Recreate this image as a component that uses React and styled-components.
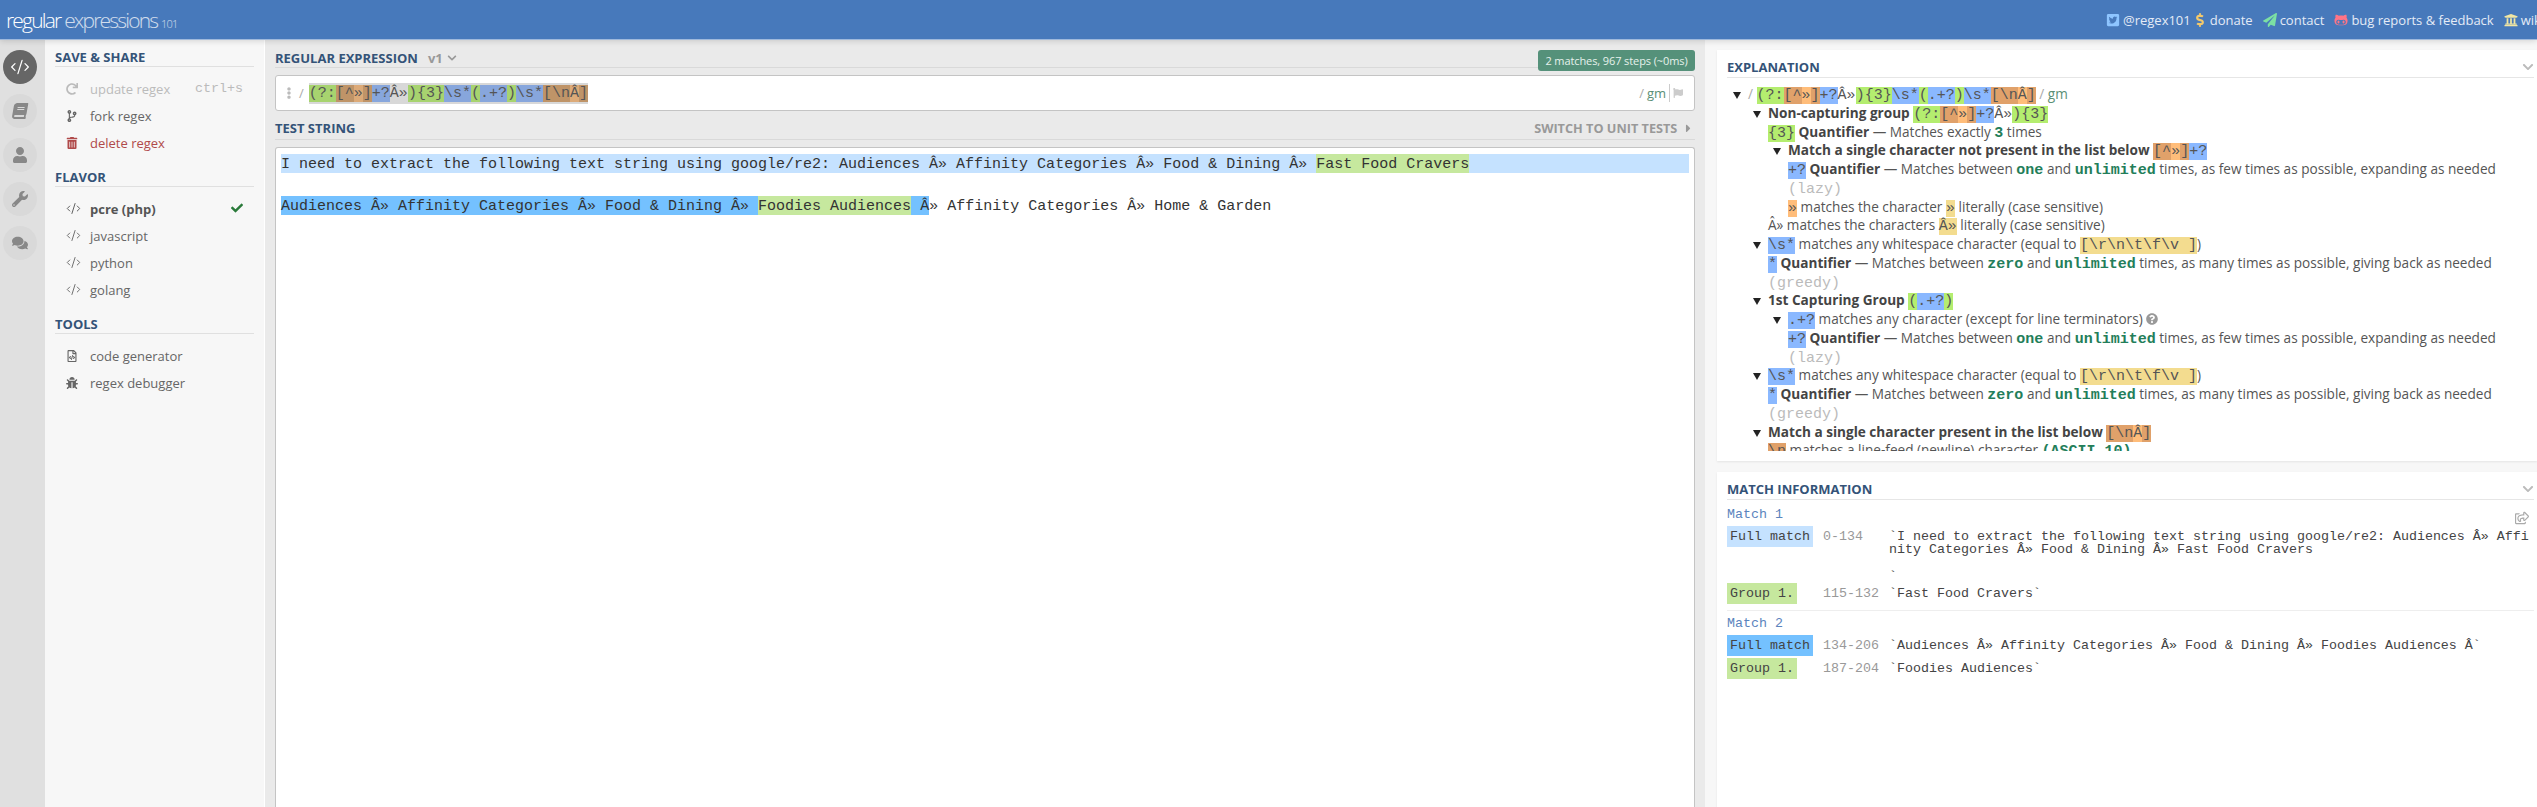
import React from "react";
import styled, { createGlobalStyle } from "styled-components";
import { CodeXml } from "lucide-react";
import {
    FaBook,
    FaUser,
    FaWrench,
    FaComments,
    FaRedo,
    FaCodeBranch,
    FaTrashAlt,
    FaCheck,
    FaRegFileCode,
    FaBug,
    FaTwitterSquare,
    FaDollarSign,
    FaPaperPlane,
    FaGithubAlt,
    FaUniversity,
    FaFlag,
    FaChevronDown,
    FaCaretRight,
    FaQuestionCircle,
    FaRegShareSquare,
    FaEllipsisV,
} from "react-icons/fa";

const SANS = `"Open Sans", "Noto Sans", sans-serif`;
const MONO = `"Liberation Mono", monospace`;

const REGEX_TOKENS = [
    ["group", "(?:"],
    ["set", "[^"],
    ["char", "»"],
    ["set", "]"],
    ["quant", "+?"],
    ["plain", "Â»"],
    ["group", "){3}"],
    ["quant", "\\s*"],
    ["group", "("],
    ["quant", ".+?"],
    ["group", ")"],
    ["quant", "\\s*"],
    ["set", "[\\n"],
    ["char", "Â"],
    ["set", "]"],
];

const NON_CAPTURING = REGEX_TOKENS.slice(0, 7);
const CHAR_SET = REGEX_TOKENS.slice(1, 5);
const CAPTURE = REGEX_TOKENS.slice(8, 11);
const LAST_SET = REGEX_TOKENS.slice(12);

const Tokens = ({ list, $muted }) =>
    list.map(([kind, text], i) => (
        <Tok key={i} $kind={kind} $muted={$muted}>
            {text}
        </Tok>
    ));

const Quantifier = ({ level, token, from, how, mode }) => (
    <Row $level={level}>
        <Tok $kind="quant">{token}</Tok> <b>Quantifier</b> — Matches between <Em>{from}</Em> and{" "}
        <Em>unlimited</Em> times, {how} <Dim>({mode})</Dim>
    </Row>
);

const Whitespace = () => (
    <>
        <Row $level={1} $open>
            <Tok $kind="quant">\s*</Tok> matches any whitespace character (equal to{" "}
            <Tok $kind="literal">[\r\n\t\f\v ]</Tok>)
        </Row>
        <Quantifier
            level={1}
            token="*"
            from="zero"
            how="as many times as possible, giving back as needed"
            mode="greedy"
        />
    </>
);

const App = () => {
    return (
        <>
            <Global />
            <Page>
                <Header>
                    <Logo>
                        regular <span>expressions</span> <small>101</small>
                    </Logo>
                    <Nav>
                        <NavLink $color="#8ec5ff">
                            <FaTwitterSquare /> @regex101
                        </NavLink>
                        <NavLink $color="#f3c96c">
                            <FaDollarSign /> donate
                        </NavLink>
                        <NavLink $color="#7ce0a3">
                            <FaPaperPlane /> contact
                        </NavLink>
                        <NavLink $color="#ff7486">
                            <FaGithubAlt /> bug reports &amp; feedback
                        </NavLink>
                        <NavLink $color="#f1e6a3">
                            <FaUniversity /> wiki
                        </NavLink>
                    </Nav>
                </Header>
                <Main>
                    <Rail>
                        <RailButton $active>
                            <CodeXml size={20} strokeWidth={1.5} />
                        </RailButton>
                        <RailButton>
                            <TiltedBook />
                        </RailButton>
                        <RailButton>
                            <FaUser />
                        </RailButton>
                        <RailButton>
                            <FaWrench />
                        </RailButton>
                        <RailButton>
                            <FaComments />
                        </RailButton>
                    </Rail>
                    <Sidebar>
                        <SideTitle>Save &amp; Share</SideTitle>
                        <SideList>
                            <SideItem $tone="disabled">
                                <FaRedo />
                                update regex
                                <Shortcut>ctrl+s</Shortcut>
                            </SideItem>
                            <SideItem>
                                <FaCodeBranch />
                                fork regex
                            </SideItem>
                            <SideItem $tone="danger">
                                <FaTrashAlt />
                                delete regex
                            </SideItem>
                        </SideList>
                        <SideTitle>Flavor</SideTitle>
                        <SideList>
                            <SideItem $tone="active">
                                <CodeXml size={15} strokeWidth={1.5} />
                                pcre (php)
                                <Check>
                                    <FaCheck />
                                </Check>
                            </SideItem>
                            <SideItem>
                                <CodeXml size={15} strokeWidth={1.5} />
                                javascript
                            </SideItem>
                            <SideItem>
                                <CodeXml size={15} strokeWidth={1.5} />
                                python
                            </SideItem>
                            <SideItem>
                                <CodeXml size={15} strokeWidth={1.5} />
                                golang
                            </SideItem>
                        </SideList>
                        <SideTitle>Tools</SideTitle>
                        <SideList>
                            <SideItem>
                                <FaRegFileCode />
                                code generator
                            </SideItem>
                            <SideItem>
                                <FaBug />
                                regex debugger
                            </SideItem>
                        </SideList>
                    </Sidebar>
                    <Center>
                        <CenterHead>
                            <Title>Regular Expression</Title>
                            <Version>
                                v1 <FaChevronDown />
                            </Version>
                            <Badge>2 matches, 967 steps (~0ms)</Badge>
                        </CenterHead>
                        <RegexBox>
                            <Grip>
                                <FaEllipsisV />
                            </Grip>
                            <Slash>/</Slash>
                            <RegexText>
                                <Tokens list={REGEX_TOKENS} $muted />
                            </RegexText>
                            <Flags>
                                <Slash>/</Slash>
                                <FlagText $divided>gm</FlagText>
                                <FaFlag />
                            </Flags>
                        </RegexBox>
                        <TestHead>
                            <Title>Test String</Title>
                            <SwitchLink>
                                Switch to unit tests <FaCaretRight />
                            </SwitchLink>
                        </TestHead>
                        <Editor>
                            <TestLine $fill="#c5e2ff">
                                I need to extract the following text string using google/re2:
                                Audiences Â» Affinity Categories Â» Food &amp; Dining Â»{" "}
                                <Mark $fill="#c6e89e">Fast Food Cravers</Mark>
                            </TestLine>
                            <TestLine>
                                <Mark $fill="#74c1ff">
                                    Audiences Â» Affinity Categories Â» Food &amp; Dining Â»{" "}
                                </Mark>
                                <Mark $fill="#c6e89e">Foodies Audiences</Mark>
                                <Mark $fill="#74c1ff"> Â</Mark>» Affinity Categories Â» Home &amp;
                                Garden
                            </TestLine>
                        </Editor>
                    </Center>
                    <Side>
                        <Panel $height="411px">
                            <PanelHead>
                                <Title>Explanation</Title>
                                <FaChevronDown />
                            </PanelHead>
                            <Tree>
                                <Row $level={0} $open>
                                    <Slash>/</Slash> <Tokens list={REGEX_TOKENS} />{" "}
                                    <Slash>/</Slash> <FlagText>gm</FlagText>
                                </Row>
                                <Row $level={1} $open>
                                    <b>Non-capturing group</b> <Tokens list={NON_CAPTURING} />
                                </Row>
                                <Row $level={1}>
                                    <Tok $kind="group">{"{3}"}</Tok> <b>Quantifier</b> — Matches
                                    exactly <Em>3</Em> times
                                </Row>
                                <Row $level={2} $open>
                                    <b>Match a single character not present in the list below</b>{" "}
                                    <Tokens list={CHAR_SET} />
                                </Row>
                                <Quantifier
                                    level={2}
                                    token="+?"
                                    from="one"
                                    how="as few times as possible, expanding as needed"
                                    mode="lazy"
                                />
                                <Row $level={2}>
                                    <Tok $kind="char">»</Tok> matches the character{" "}
                                    <Tok $kind="literal">»</Tok> literally (case sensitive)
                                </Row>
                                <Row $level={1}>
                                    Â» matches the characters <Tok $kind="literal">Â»</Tok> literally
                                    (case sensitive)
                                </Row>
                                <Whitespace />
                                <Row $level={1} $open>
                                    <b>1st Capturing Group</b> <Tokens list={CAPTURE} />
                                </Row>
                                <Row $level={2} $open>
                                    <Tok $kind="quant">.+?</Tok> matches any character (except for
                                    line terminators){" "}
                                    <Hint>
                                        <FaQuestionCircle />
                                    </Hint>
                                </Row>
                                <Quantifier
                                    level={2}
                                    token="+?"
                                    from="one"
                                    how="as few times as possible, expanding as needed"
                                    mode="lazy"
                                />
                                <Whitespace />
                                <Row $level={1} $open>
                                    <b>Match a single character present in the list below</b>{" "}
                                    <Tokens list={LAST_SET} />
                                </Row>
                                <Row $level={1}>
                                    <Tok $kind="set">\n</Tok> matches a line-feed (newline) character{" "}
                                    <Em>(ASCII 10)</Em>
                                </Row>
                            </Tree>
                        </Panel>
                        <Panel>
                            <PanelHead>
                                <Title>Match Information</Title>
                                <FaChevronDown />
                            </PanelHead>
                            <MatchBlock>
                                <MatchTitle>
                                    Match 1
                                    <Share>
                                        <FaRegShareSquare />
                                    </Share>
                                </MatchTitle>
                                <MatchRow>
                                    <MatchLabel $fill="#c5e2ff">Full match</MatchLabel>
                                    <MatchRange>0-134</MatchRange>
                                    <MatchValue>{`\`I need to extract the following text string using google/re2: Audiences Â» Affinity Categories Â» Food & Dining Â» Fast Food Cravers\n\n\``}</MatchValue>
                                </MatchRow>
                                <MatchRow>
                                    <MatchLabel $fill="#c6e89e">Group 1.</MatchLabel>
                                    <MatchRange>115-132</MatchRange>
                                    <MatchValue>`Fast Food Cravers`</MatchValue>
                                </MatchRow>
                            </MatchBlock>
                            <MatchBlock>
                                <MatchTitle>Match 2</MatchTitle>
                                <MatchRow>
                                    <MatchLabel $fill="#74c1ff">Full match</MatchLabel>
                                    <MatchRange>134-206</MatchRange>
                                    <MatchValue>
                                        `Audiences Â» Affinity Categories Â» Food &amp; Dining Â» Foodies
                                        Audiences Â`
                                    </MatchValue>
                                </MatchRow>
                                <MatchRow>
                                    <MatchLabel $fill="#c6e89e">Group 1.</MatchLabel>
                                    <MatchRange>187-204</MatchRange>
                                    <MatchValue>`Foodies Audiences`</MatchValue>
                                </MatchRow>
                            </MatchBlock>
                        </Panel>
                    </Side>
                </Main>
            </Page>
        </>
    );
};

export default App;

const Global = createGlobalStyle`
    html, body {
        margin: 0;
        height: 100%;
        overflow: hidden;
    }
    body {
        font-family: ${SANS};
        font-size: 13px;
        color: #555;
    }
`;

const Page = styled.div`
    height: 100vh;
    display: flex;
    flex-direction: column;
    overflow: hidden;
`;

const Header = styled.header`
    flex: 0 0 40px;
    box-sizing: border-box;
    display: flex;
    align-items: center;
    background: #4779bb;
    border-bottom: 1px solid #9fb9dc;
    box-shadow: 0 1px 6px rgba(0, 0, 0, 0.15);
    position: relative;
    z-index: 1;
    overflow: hidden;
`;

const Logo = styled.div`
    padding-left: 6px;
    color: #fff;
    font-size: 21px;
    font-weight: 300;
    letter-spacing: -1.8px;
    white-space: nowrap;
    span {
        opacity: 0.75;
    }
    small {
        font-size: 11px;
        letter-spacing: -0.8px;
        opacity: 0.75;
    }
`;

const Nav = styled.nav`
    flex: 0 0 431px;
    min-width: 0;
    margin-left: auto;
    display: flex;
    gap: 10px;
    white-space: nowrap;
`;

const NavLink = styled.a`
    flex: none;
    display: flex;
    align-items: center;
    gap: 3px;
    color: #e4ebf6;
    font-size: 13px;
    &:first-child {
        margin-right: -8px;
    }
    svg {
        color: ${(p) => p.$color};
        font-size: 14px;
    }
`;

const Main = styled.div`
    flex: 1;
    min-height: 0;
    display: grid;
    grid-template-columns: 45px 220px 1440px 1fr;
`;

const Rail = styled.div`
    background: #e0e0e0;
    padding: 10px 3px 0;
    display: flex;
    flex-direction: column;
    gap: 10px;
`;

const RailButton = styled.div`
    width: 34px;
    height: 34px;
    border-radius: 50%;
    background: ${(p) => (p.$active ? "#666" : "#d9d9d9")};
    color: ${(p) => (p.$active ? "#fff" : "#888")};
    display: flex;
    align-items: center;
    justify-content: center;
    font-size: 16px;
`;

const TiltedBook = styled(FaBook)`
    transform: skewX(-10deg);
`;

const Sidebar = styled.aside`
    background: #f7f7f7;
    border-right: 1px solid #fff;
    padding: 8px 10px 0 10px;
`;

const SideTitle = styled.h3`
    margin: 0;
    height: 18px;
    line-height: 18px;
    font-size: 13px;
    font-weight: 700;
    text-transform: uppercase;
    color: #345378;
    border-bottom: 1px solid #e0e0e0;
`;

const SideList = styled.div`
    padding: 8px 0 12px;
`;

const toneColor = {
    disabled: "#bbb",
    danger: "#b04a4a",
    active: "#555",
};

const SideItem = styled.div`
    height: 27px;
    display: flex;
    align-items: center;
    padding-left: 35px;
    position: relative;
    font-size: 13px;
    font-weight: ${(p) => (p.$tone === "active" ? 700 : 400)};
    color: ${(p) => toneColor[p.$tone] || "#666"};
    > svg {
        position: absolute;
        left: 11px;
        font-size: 12px;
    }
`;

const Shortcut = styled.span`
    margin-left: auto;
    margin-right: 11px;
    font-family: ${MONO};
    font-size: 13.33px;
    font-weight: 400;
    color: #bbb;
`;

const Check = styled.span`
    position: absolute;
    right: 11px;
    top: 7px;
    color: #2a7a3a;
    font-size: 12px;
    svg {
        display: block;
    }
`;

const Center = styled.section`
    background: #eaeaea;
    padding: 8px 10px 0;
    display: flex;
    flex-direction: column;
    min-height: 0;
`;

const Title = styled.h3`
    margin: 0;
    font-size: 13px;
    font-weight: 700;
    line-height: 18px;
    text-transform: uppercase;
    color: #345378;
`;

const CenterHead = styled.div`
    display: flex;
    align-items: center;
    gap: 10px;
    height: 19px;
    border-bottom: 1px solid #d9d9d9;
    position: relative;
`;

const Version = styled.span`
    display: flex;
    align-items: center;
    gap: 4px;
    font-weight: 700;
    color: #999;
    svg {
        font-size: 10px;
    }
`;

const Badge = styled.span`
    position: absolute;
    right: 0;
    top: 2px;
    width: 157px;
    height: 21px;
    box-sizing: border-box;
    border-radius: 3px;
    background: #55917a;
    color: #e6f2ec;
    font-size: 11px;
    letter-spacing: -0.1px;
    line-height: 21px;
    text-align: center;
    white-space: nowrap;
`;

const RegexBox = styled.div`
    margin-top: 7px;
    height: 36px;
    box-sizing: border-box;
    display: flex;
    align-items: center;
    background: #fff;
    border: 1px solid #c4c4c4;
    border-radius: 3px;
    padding: 0 11px 0 7px;
`;

const Grip = styled.span`
    color: #bbb;
    font-size: 12px;
    display: flex;
    margin-right: 4px;
`;

const Slash = styled.span`
    color: #aaa;
`;

const RegexText = styled.code`
    margin-left: 5px;
    font-family: ${MONO};
    font-size: 15px;
    line-height: 21px;
    background: #d8d8d8;
    color: #555;
    white-space: pre;
`;

const Flags = styled.div`
    margin-left: auto;
    display: flex;
    align-items: center;
    gap: 3px;
    svg {
        color: #ccc;
        font-size: 10px;
    }
`;

const FlagText = styled.span`
    color: #5a8f76;
    font-family: ${SANS};
    padding-right: ${(p) => (p.$divided ? "3px" : 0)};
    border-right: ${(p) => (p.$divided ? "1px solid #ccc" : "0")};
`;

const TestHead = styled.div`
    margin-top: 6px;
    height: 22px;
    display: flex;
    align-items: center;
    justify-content: space-between;
    border-bottom: 1px solid #d9d9d9;
`;

const SwitchLink = styled.span`
    display: flex;
    align-items: center;
    gap: 5px;
    font-size: 12.7px;
    font-weight: 700;
    text-transform: uppercase;
    color: #999;
`;

const Editor = styled.div`
    margin-top: 7px;
    flex: 1;
    background: #fff;
    border: 1px solid #c4c4c4;
    border-bottom: 0;
    border-radius: 3px 3px 0 0;
    padding: 6px 5px 0;
    font-family: ${MONO};
    font-size: 15px;
    color: #333;
`;

const TestLine = styled.div`
    height: 19px;
    line-height: 21px;
    margin-bottom: 23px;
    white-space: pre-wrap;
    background: ${(p) => p.$fill || "transparent"};
`;

const Mark = styled.span`
    display: inline-block;
    height: 19px;
    white-space: pre;
    background: ${(p) => p.$fill};
`;

const strongTok = {
    group: "#b4ed6f",
    set: "#e0a16a",
    char: "#ffbd7a",
    quant: "#8ab8ff",
    literal: "#f3dc8f",
    plain: "transparent",
};

const mutedTok = {
    group: "#a7d36f",
    set: "#bf9468",
    char: "#dcaa78",
    quant: "#87a6dc",
    plain: "transparent",
};

const Tok = styled.span`
    font-family: ${MONO};
    font-size: 15px;
    line-height: 1;
    color: #555;
    background: ${(p) => (p.$muted ? mutedTok : strongTok)[p.$kind]};
`;

const Side = styled.aside`
    background: #f7f7f7;
    padding: 10px 0 0 12px;
    display: flex;
    flex-direction: column;
    gap: 11px;
    min-width: 0;
    min-height: 0;
`;

const Panel = styled.div`
    background: #fff;
    box-shadow: 0 1px 2px rgba(0, 0, 0, 0.08);
    padding: 7px 3px 0 10px;
    box-sizing: border-box;
    flex: ${(p) => (p.$height ? `0 0 ${p.$height}` : "1")};
    display: flex;
    flex-direction: column;
    min-height: 0;
    overflow: hidden;
`;

const PanelHead = styled.div`
    flex: none;
    height: 20px;
    display: flex;
    align-items: center;
    justify-content: space-between;
    border-bottom: 1px solid #e6e6e6;
    > svg {
        color: #bbb;
        font-size: 12px;
    }
`;

const Tree = styled.div`
    margin-top: 7px;
    height: 366px;
    overflow: hidden;
`;

const Row = styled.div`
    position: relative;
    padding-left: ${(p) => 21 + p.$level * 20}px;
    line-height: 18.75px;
    font-size: 13.6px;
    color: #555;
    b {
        font-weight: 700;
        color: #444;
    }
    &::before {
        content: "";
        display: ${(p) => (p.$open ? "block" : "none")};
        position: absolute;
        left: ${(p) => 6 + p.$level * 20}px;
        top: 7px;
        border-left: 4px solid transparent;
        border-right: 4px solid transparent;
        border-top: 7px solid #222;
    }
`;

const Em = styled.strong`
    font-family: ${MONO};
    font-size: 15px;
    line-height: 1;
    color: #237e5a;
`;

const Dim = styled.span`
    font-family: ${MONO};
    font-size: 15px;
    line-height: 1;
    color: #bbb;
`;

const Hint = styled.span`
    color: #999;
    font-size: 12px;
    line-height: 1;
    vertical-align: -1px;
`;

const MatchBlock = styled.div`
    padding: 3px 0 4px;
    border-bottom: 1px solid #eee;
    font-family: ${MONO};
    font-size: 13.33px;
    ${PanelHead} + & {
        padding-top: 5px;
    }
    &:last-child {
        border-bottom: 0;
    }
`;

const MatchTitle = styled.div`
    height: 19px;
    line-height: 19px;
    margin-bottom: 2px;
    color: #5b84bd;
    position: relative;
`;

const Share = styled.span`
    position: absolute;
    right: 5px;
    top: 6px;
    color: #aaa;
    font-size: 14px;
`;

const MatchRow = styled.div`
    display: grid;
    grid-template-columns: 86px 56px 1fr;
    column-gap: 10px;
    align-items: start;
    margin-bottom: 2px;
`;

const MatchLabel = styled.span`
    justify-self: start;
    height: 21px;
    line-height: 21px;
    padding: 0 3px;
    color: #444;
    background: ${(p) => p.$fill};
`;

const MatchRange = styled.span`
    line-height: 21px;
    color: #999;
`;

const MatchValue = styled.span`
    min-width: 0;
    padding-top: 4px;
    margin-bottom: -2px;
    line-height: 13.33px;
    color: #444;
    white-space: pre-wrap;
    word-break: break-all;
`;
